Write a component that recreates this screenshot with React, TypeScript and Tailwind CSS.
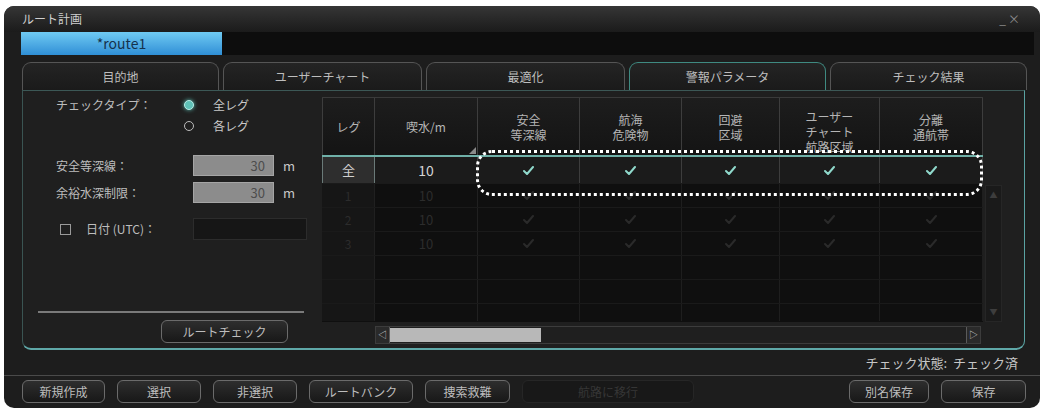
import React from "react";

const font = "font-['Noto_Sans_CJK_JP','Noto_Sans',sans-serif]";

const tabs = ["目的地", "ユーザーチャート", "最適化", "警報パラメータ", "チェック結果"];

const columns = [
  { w: "w-[53px]", label: ["レグ"] },
  { w: "w-[103px]", label: ["喫水/m"] },
  { w: "w-[102px]", label: ["安全", "等深線"] },
  { w: "w-[102px]", label: ["航海", "危険物"] },
  { w: "w-[98px]", label: ["回避", "区域"] },
  { w: "w-[100px]", label: ["ユーザー", "チャート", "航路区域"] },
  { w: "w-[103px]", label: ["分離", "通航帯"] },
];

const legs = ["1", "2", "3", "", "", ""];

function Check({ dim }: { dim?: boolean }) {
  return (
    <svg width="11" height="9" viewBox="0 0 11 9">
      <path
        d="M1 5 L4 8 L10 1"
        fill="none"
        stroke={dim ? "#2a2a2a" : "#8fd8cb"}
        strokeWidth="2"
        strokeLinecap="round"
        strokeLinejoin="round"
      />
    </svg>
  );
}

function Btn({ w, children, disabled }: { w: string; children?: React.ReactNode; disabled?: boolean }) {
  return (
    <div
      className={`${w} h-[23px] flex items-center justify-center rounded-[6px] border text-[12px] ${
        disabled
          ? "border-[#262626] bg-[#181818] text-[#363636]"
          : "border-[#6b6b6b] bg-gradient-to-b from-[#2e2e2e] to-[#181818] text-[#bdbdbd]"
      }`}
    >
      {children}
    </div>
  );
}

function Field({ label, value }: { label: string; value: string }) {
  return (
    <div className="flex items-center h-[21px]">
      <span className="w-[170px] pl-[33px] text-[12px] text-[#bdbdbd]">{label}</span>
      <div className="w-[81px] h-[21px] bg-[#8c8c8c] border border-[#a5a5a5] flex items-center justify-end pr-[8px] text-[13px] text-[#4d4d4d]">
        {value}
      </div>
      <span className="ml-[9px] text-[13px] text-[#c9c9c9]">m</span>
    </div>
  );
}

export default function App() {
  return (
    <div className={`w-[1048px] h-[412px] bg-white pl-[4px] pt-[6px] ${font}`}>
      <div className="relative w-[1036px] h-[402px] rounded-[10px] bg-[#1d1d1d] flex flex-col overflow-hidden">
        {/* title bar */}
        <div className="h-[26px] flex items-center justify-between px-[18px] bg-gradient-to-b from-[#363636] to-[#1b1b1b]">
          <span className="text-[12px] text-[#cfcfcf]">ルート計画</span>
          <span className="text-[12px] text-[#8a8a8a] tracking-[2px]">_×</span>
        </div>

        {/* route selector */}
        <div className="h-[23px] ml-[17px] mr-[6px] bg-[#0d0d0d] flex">
          <div className="w-[201px] h-full bg-gradient-to-b from-[#6fcaf2] to-[#2f8fd6] flex items-center justify-center text-[14px] text-[#15324c]">
            *route1
          </div>
        </div>

        {/* tabs */}
        <div className="h-[28px] mt-[7px] ml-[18px] flex gap-[4px]">
          {tabs.map((t, i) => (
            <div
              key={t}
              className={`${i === 1 || i === 2 ? "w-[199px]" : "w-[197px]"} h-full rounded-t-[9px] border border-b-0 flex items-center justify-center text-[12px] text-[#bdbdbd] bg-gradient-to-b from-[#242424] to-[#1a1a1a] ${
                i === 3 ? "border-[#3f8a81]" : "border-[#555555]"
              }`}
            >
              {t}
            </div>
          ))}
        </div>

        {/* panel */}
        <div className="h-[260px] ml-[18px] w-[1003px] rounded-b-[9px] border border-t-[#3c5856] border-l-[#3a5452] border-r-[#5aa3a2] border-b-[2px] border-b-[#5fa8a8] bg-[#1f1f1f] flex">
          {/* left settings */}
          <div className="w-[299px] flex flex-col pt-[6px]">
            <div className="flex h-[16px] items-center">
              <span className="w-[161px] pl-[33px] text-[12px] text-[#bdbdbd]">チェックタイプ：</span>
              <span className="w-[10px] h-[10px] rounded-full bg-[#5fc2b8] border border-[#b8ece6] shadow-[0_0_4px_#5fc2b8]" />
              <span className="ml-[19px] text-[12px] text-[#c9c9c9]">全レグ</span>
            </div>
            <div className="flex h-[16px] items-center mt-[5px]">
              <span className="w-[161px]" />
              <span className="w-[10px] h-[10px] rounded-full border border-[#bcbcbc]" />
              <span className="ml-[19px] text-[12px] text-[#c9c9c9]">各レグ</span>
            </div>
            <div className="mt-[21px] flex flex-col gap-[6px]">
              <Field label="安全等深線：" value="30" />
              <Field label="余裕水深制限：" value="30" />
            </div>
            <div className="mt-[15px] flex items-center h-[22px]">
              <span className="ml-[37px] w-[11px] h-[11px] border border-[#9a9a9a]" />
              <span className="ml-[15px] w-[107px] text-[12px] text-[#bdbdbd]">日付 (UTC)：</span>
              <div className="w-[114px] h-[22px] bg-[#161616] border border-[#2c2c2c]" />
            </div>
            <div className="mt-[71px] ml-[15px] w-[266px] h-[2px] shrink-0 bg-[#7a7a7a]" />
            <div className="mt-[7px] ml-[138px]">
              <Btn w="w-[127px]">ルートチェック</Btn>
            </div>
          </div>

          {/* leg table */}
          <div className="relative mt-[6px] w-[681px] h-[248px] flex flex-col">
            <div className="flex">
              <div className="flex flex-col bg-[#0f0f0f]">
                {/* header */}
                <div className="flex h-[58px] bg-gradient-to-b from-[#1d1d1d] to-[#141414] border-t border-[#3a3a3a]">
                  {columns.map((c, i) => (
                    <div
                      key={i}
                      className={`${c.w} relative flex flex-col items-center justify-center border-r border-[#3d3d3d] ${
                        i === 0 ? "border-l" : ""
                      } text-[12px] leading-[15px] text-[#b5b5b5] ${c.label.length === 3 ? "pt-[10px]" : ""}`}
                    >
                      {c.label.map((l) => (
                        <span key={l}>{l}</span>
                      ))}
                      {i === 1 && (
                        <svg className="absolute right-[1px] bottom-[1px]" width="7" height="7" viewBox="0 0 7 7">
                          <path d="M7 0 L7 7 L0 7 Z" fill="#8a8a8a" />
                        </svg>
                      )}
                    </div>
                  ))}
                </div>

                {/* all-legs row */}
                <div className="flex h-[28px] border-t-[2px] border-[#6fb0a8] bg-[#1b1b1b]">
                  <div className="w-[53px] flex items-center justify-center border-l border-r border-[#6a7a78] bg-[#2e2e2e] text-[13px] text-[#d0d0d0]">
                    全
                  </div>
                  <div className="w-[103px] flex items-center justify-center border-r border-[#3d3d3d] text-[14px] text-[#d4d4d4]">
                    10
                  </div>
                  {columns.slice(2).map((c, i) => (
                    <div key={i} className={`${c.w} flex items-center justify-center border-r border-[#3d3d3d]`}>
                      <Check />
                    </div>
                  ))}
                </div>

                {/* leg rows */}
                {legs.map((n, r) => (
                  <div key={r} className={`flex ${r === 5 ? "h-[18px]" : "h-[24px]"} border-t border-[#1a1a1a]`}>
                    <div className="w-[53px] flex items-center justify-center bg-[#161616] border-r border-[#202020] text-[12px] text-[#2c2c2c]">
                      {n}
                    </div>
                    <div className="w-[103px] flex items-center justify-center border-r border-[#202020] text-[13px] text-[#2c2c2c]">
                      {n && "10"}
                    </div>
                    {columns.slice(2).map((c, i) => (
                      <div key={i} className={`${c.w} flex items-center justify-center border-r border-[#1e1e1e]`}>
                        {n && <Check dim />}
                      </div>
                    ))}
                  </div>
                ))}
              </div>

              {/* vertical scrollbar */}
              <div className="w-[20px] flex flex-col">
                <div className="h-[88px]" />
                <div className="ml-[2px] w-[17px] h-[137px] bg-[#1a1a1a] border border-[#262626] flex flex-col items-center justify-between py-[3px] text-[8px] text-[#3d3d3d]">
                  <span>▲</span>
                  <span>▼</span>
                </div>
              </div>
            </div>

            {/* horizontal scrollbar */}
            <div className="ml-[53px] mt-[4px] w-[606px] h-[18px] flex items-center bg-[#1f1f1f] border border-[#3c3c3c]">
              <div className="w-[14px] h-full flex items-center justify-center border-r border-[#5a5a5a] bg-[#2a2a2a] text-[9px] text-[#cfcfcf]">
                ◁
              </div>
              <div className="w-[151px] h-[14px] bg-[#b8b8b8]" />
              <div className="flex-1" />
              <div className="w-[14px] h-full flex items-center justify-center border-l border-[#5a5a5a] bg-[#2a2a2a] text-[9px] text-[#cfcfcf]">
                ▷
              </div>
            </div>

            {/* highlighted check row */}
            <div className="absolute left-[154px] top-[53px] w-[507px] h-[46px] rounded-[16px] border-[3px] border-dotted border-white" />
          </div>
        </div>

        {/* status */}
        <div className="h-[25px] flex items-center justify-end pr-[22px] text-[13px] text-[#c6c6c6]">
          チェック状態:&nbsp;&nbsp;チェック済
        </div>
        <div className="h-[1px] bg-[#4a4a4a]" />

        {/* action buttons */}
        <div className="mt-[4px] ml-[18px] flex gap-[12px]">
          <Btn w="w-[83px]">新規作成</Btn>
          <Btn w="w-[84px]">選択</Btn>
          <Btn w="w-[84px]">非選択</Btn>
          <Btn w="w-[104px]">ルートバンク</Btn>
          <Btn w="w-[85px]">捜索救難</Btn>
          <Btn w="w-[172px]" disabled>
            航路に移行
          </Btn>
          <div className="w-[131px]" />
          <Btn w="w-[80px]">別名保存</Btn>
          <Btn w="w-[85px]">保存</Btn>
        </div>
      </div>
    </div>
  );
}
